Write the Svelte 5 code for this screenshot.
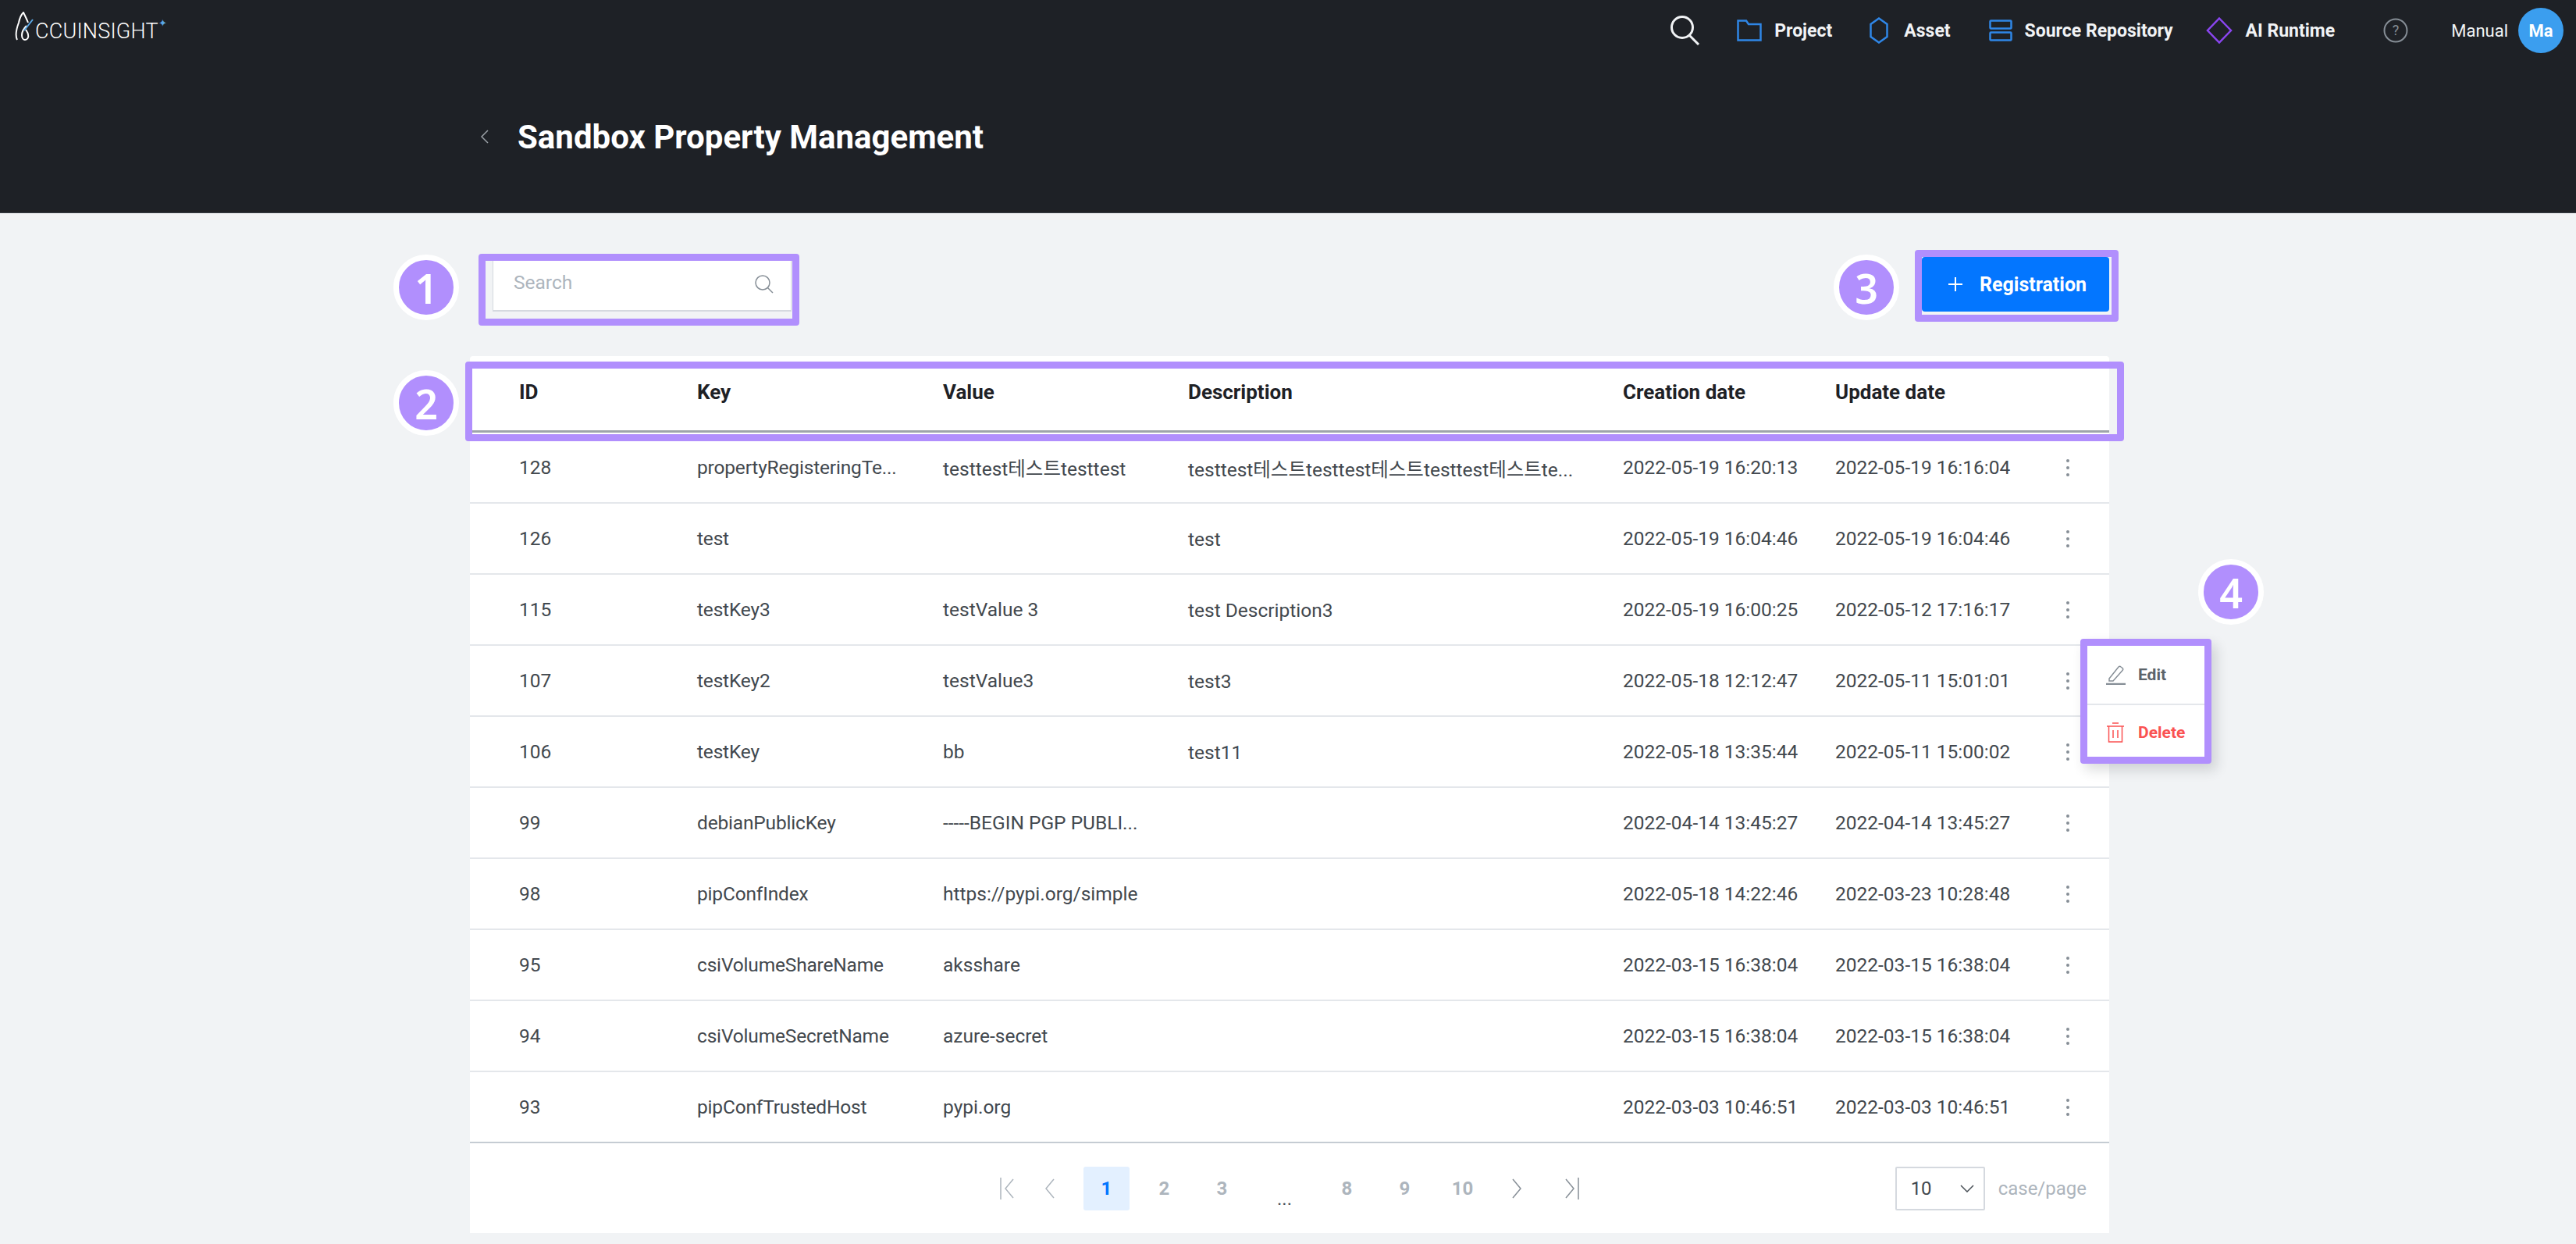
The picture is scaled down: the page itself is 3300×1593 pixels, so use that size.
<script>
    const columns = ['ID', 'Key', 'Value', 'Description', 'Creation date', 'Update date'];

    const rows = [
        { id: 128, key: 'propertyRegisteringTe...', value: 'testtest테스트testtest', description: 'testtest테스트testtest테스트testtest테스트te...', created: '2022-05-19 16:20:13', updated: '2022-05-19 16:16:04' },
        { id: 126, key: 'test', value: '', description: 'test', created: '2022-05-19 16:04:46', updated: '2022-05-19 16:04:46' },
        { id: 115, key: 'testKey3', value: 'testValue 3', description: 'test Description3', created: '2022-05-19 16:00:25', updated: '2022-05-12 17:16:17' },
        { id: 107, key: 'testKey2', value: 'testValue3', description: 'test3', created: '2022-05-18 12:12:47', updated: '2022-05-11 15:01:01' },
        { id: 106, key: 'testKey', value: 'bb', description: 'test11', created: '2022-05-18 13:35:44', updated: '2022-05-11 15:00:02' },
        { id: 99, key: 'debianPublicKey', value: '-----BEGIN PGP PUBLI...', description: '', created: '2022-04-14 13:45:27', updated: '2022-04-14 13:45:27' },
        { id: 98, key: 'pipConfIndex', value: 'https://pypi.org/simple', description: '', created: '2022-05-18 14:22:46', updated: '2022-03-23 10:28:48' },
        { id: 95, key: 'csiVolumeShareName', value: 'aksshare', description: '', created: '2022-03-15 16:38:04', updated: '2022-03-15 16:38:04' },
        { id: 94, key: 'csiVolumeSecretName', value: 'azure-secret', description: '', created: '2022-03-15 16:38:04', updated: '2022-03-15 16:38:04' },
        { id: 93, key: 'pipConfTrustedHost', value: 'pypi.org', description: '', created: '2022-03-03 10:46:51', updated: '2022-03-03 10:46:51' }
    ];

    // numbered callouts drawn over the page
    const callouts = [
        { n: 1, x: 546, y: 368 },
        { n: 2, x: 546, y: 516 },
        { n: 3, x: 2391, y: 368 },
        { n: 4, x: 2858, y: 758 }
    ];
</script>

<div class="page">
    <header class="top">
        <nav class="nav">
            <div class="logo">
                <svg width="26" height="38" viewBox="0 0 26 38" fill="none">
                    <path d="M3 36C0 30 2 22 5 14C6 9 8 4 11 1C13 5 15 9 17 14" stroke="#fff" stroke-width="2" />
                    <path d="M15 18C11 22 9 26 9 30C9 34 11 36 13 36C16 36 18 33 17 29C16.500 26 15 25 14 23" stroke="#fff" stroke-width="2" />
                    <path d="M12 24L23 10" stroke="#5ba8e6" stroke-width="2" />
                </svg>
                <span class="logo-text">CCUINSIGHT</span>
                <span class="logo-star">✦</span>
            </div>

            <div class="nav-right">
                <svg class="nav-search" width="40" height="38" viewBox="0 0 40 38" fill="none" stroke="#f1f3f5" stroke-width="3">
                    <circle cx="17" cy="15" r="13.500" />
                    <path d="M26 25L38 37" />
                </svg>

                <div class="nav-item project">
                    <svg width="32" height="28" viewBox="0 0 32 28" fill="none" stroke="#2f86e6" stroke-width="2.500">
                        <path d="M1.500 1.500H12L15 6H30.500V26.500H1.500Z" />
                    </svg>
                    <span>Project</span>
                </div>
                <div class="nav-item asset">
                    <svg width="24" height="34" viewBox="0 0 24 34" fill="none" stroke="#2f86e6" stroke-width="2.500">
                        <path d="M12 1.500L22.500 9V25L12 32.500L1.500 25V9Z" />
                    </svg>
                    <span>Asset</span>
                </div>
                <div class="nav-item source">
                    <svg width="30" height="28" viewBox="0 0 30 28" fill="none" stroke="#2f86e6" stroke-width="2.500">
                        <rect x="1.500" y="1.500" width="27" height="10" rx="1" />
                        <rect x="1.500" y="16.500" width="27" height="10" rx="1" />
                    </svg>
                    <span>Source Repository</span>
                </div>
                <div class="nav-item">
                    <svg width="36" height="34" viewBox="0 0 36 34" fill="none" stroke="#8a45f0" stroke-width="2.500">
                        <path d="M18 1.500L33 17L18 32.500L3 17Z" />
                    </svg>
                    <span>AI Runtime</span>
                </div>

                <svg class="nav-help" width="32" height="34" viewBox="0 0 32 34" fill="none">
                    <circle cx="16" cy="17" r="14.500" stroke="#868e96" stroke-width="2" />
                    <text x="16" y="23" text-anchor="middle" fill="#868e96" class="help-mark">?</text>
                </svg>

                <span class="manual">Manual</span>
                <div class="avatar">Ma</div>
            </div>
        </nav>

        <div class="title-row">
            <svg width="12" height="18" viewBox="0 0 12 18" fill="none" stroke="#9aa0a6" stroke-width="1.500">
                <path d="M10 1L2 9L10 17" />
            </svg>
            <h1>Sandbox Property Management</h1>
        </div>
    </header>

    <main class="content">
        <div class="toolbar">
            <div class="search">
                <span>Search</span>
                <svg width="26" height="26" viewBox="0 0 26 26" fill="none" stroke="#868e96" stroke-width="1.500">
                    <circle cx="11" cy="11" r="9" />
                    <path d="M17.500 17.500L24 24" />
                </svg>
            </div>
            <button class="register">
                <svg width="20" height="20" viewBox="0 0 20 20" stroke="#fff" stroke-width="2">
                    <path d="M10 1V19M1 10H19" />
                </svg>
                Registration
            </button>
        </div>

        <section class="table">
            <div class="row head">
                {#each columns as col}
                    <div>{col}</div>
                {/each}
                <div></div>
            </div>

            {#each rows as row}
                <div class="row">
                    <div>{row.id}</div>
                    <div class="key">{row.key}</div>
                    <div>{row.value}</div>
                    <div class="low">{row.description}</div>
                    <div>{row.created}</div>
                    <div>{row.updated}</div>
                    <div class="kebab"><i></i><i></i><i></i></div>
                </div>
            {/each}

            <div class="pager-bar">
                <div class="pager">
                    <svg class="pg-first" width="18" height="28" viewBox="0 0 18 28" fill="none" stroke="#adb5bd" stroke-width="1.500">
                        <path d="M1 0V28M17 2L7 14L17 26" />
                    </svg>
                    <svg class="pg-prev" width="14" height="28" viewBox="0 0 14 28" fill="none" stroke="#adb5bd" stroke-width="1.500">
                        <path d="M12 2L2 14L12 26" />
                    </svg>
                    <span class="pg active">1</span>
                    <span class="pg">2</span>
                    <span class="pg">3</span>
                    <span class="pg dots">...</span>
                    <span class="pg">8</span>
                    <span class="pg">9</span>
                    <span class="pg">10</span>
                    <svg class="pg-next" width="14" height="28" viewBox="0 0 14 28" fill="none" stroke="#868e96" stroke-width="1.500">
                        <path d="M2 2L12 14L2 26" />
                    </svg>
                    <svg class="pg-last" width="18" height="28" viewBox="0 0 18 28" fill="none" stroke="#868e96" stroke-width="1.500">
                        <path d="M1 2L11 14L1 26M17 0V28" />
                    </svg>
                </div>
                <div class="per-page">
                    <div class="select">
                        <span>10</span>
                        <svg width="18" height="10" viewBox="0 0 18 10" fill="none" stroke="#495057" stroke-width="1.500">
                            <path d="M1 1L9 9L17 1" />
                        </svg>
                    </div>
                    <span class="case">case/page</span>
                </div>
            </div>
        </section>
    </main>

    <!-- tutorial overlay -->
    <div class="frame f1"></div>
    <div class="frame f2"></div>
    <div class="frame f3"></div>

    <div class="frame menu">
        <div class="menu-item">
            <svg width="26" height="26" viewBox="0 0 26 26" fill="none" stroke="#868e96" stroke-width="1.500">
                <path d="M4 18L16 3C17 2 18 2 19 3L21 4.500C22 5.500 22 6.500 21 7.500L9 21H4Z" />
                <path d="M0 25H25" stroke-width="2.500" />
            </svg>
            <span>Edit</span>
        </div>
        <div class="menu-item danger">
            <svg width="24" height="26" viewBox="0 0 24 26" fill="none" stroke="#fa5252" stroke-width="1.500">
                <path d="M1 5H23M8 1H16M3.500 5V25H20.500V5M9 10V20M15 10V20" />
            </svg>
            <span>Delete</span>
        </div>
    </div>

    {#each callouts as c}
        <div class="callout" style="left: {c.x - 42}px; top: {c.y - 42}px">{c.n}</div>
    {/each}
</div>

<style>
    :global(body) {
        background: #f1f3f5;
    }

    .page {
        position: relative;
        height: 1593px;
        overflow: hidden;
        background: #f1f3f5;
        font-family: Roboto, "Noto Sans CJK KR", sans-serif;
        color: #42484e;
    }

    .top {
        height: 272px;
        background: #1e2126;
        border-bottom: 1px solid #3a3f45;
    }

    .nav {
        display: flex;
        align-items: center;
        height: 78px;
        padding: 0 16px 0 19px;
    }

    .logo {
        display: flex;
        align-items: flex-end;
        height: 38px;
        margin-top: -10px;
        color: #fff;
    }

    .logo-text {
        font-size: 27px;
        font-weight: 300;
        line-height: 26px;
        letter-spacing: 0.2px;
    }

    .logo-star {
        align-self: flex-start;
        margin-top: 8px;
        font-size: 13px;
        line-height: 13px;
        color: #5ba8e6;
    }

    .nav-right {
        display: flex;
        align-items: center;
        margin-left: auto;
        color: #f1f3f5;
    }

    .nav-search {
        margin-right: 47px;
    }

    .nav-item {
        display: flex;
        align-items: center;
        gap: 16px;
        margin-right: 44px;
        font-size: 23px;
        font-weight: 700;
    }

    .project {
        margin-right: 48px;
    }

    .asset {
        gap: 20px;
        margin-right: 49px;
    }

    .source {
        margin-right: 41px;
    }

    .nav-help {
        margin: 0 55px 0 18px;
    }

    .help-mark {
        font-size: 18px;
    }

    .manual {
        margin-right: 13px;
        font-size: 22px;
    }

    .avatar {
        display: flex;
        align-items: center;
        justify-content: center;
        width: 58px;
        height: 58px;
        border-radius: 50%;
        background: #3b9eef;
        color: #fff;
        font-size: 22px;
        font-weight: 700;
    }

    .title-row {
        display: flex;
        align-items: center;
        gap: 36px;
        height: 50px;
        margin-top: 72px;
        padding-left: 615px;
    }

    h1 {
        margin: 0;
        color: #fff;
        font-size: 42px;
        font-weight: 700;
    }

    .content {
        width: 2100px;
        margin-left: 602px;
    }

    .toolbar {
        display: flex;
        justify-content: space-between;
        height: 70px;
        margin: 56px 0 57px;
    }

    .search {
        display: flex;
        align-items: center;
        justify-content: space-between;
        box-sizing: border-box;
        width: 383px;
        margin-left: 29px;
        padding: 0 21px 0 26px;
        background: #fff;
        border: 1px solid #d5d9df;
        border-bottom-width: 2px;
        color: #adb5bd;
        font-size: 24.500px;
    }

    .search span {
        margin-bottom: 5px;
    }

    .register {
        display: flex;
        align-items: center;
        gap: 21px;
        box-sizing: border-box;
        width: 240px;
        padding: 0 0 0 33px;
        background: #0376ff;
        border: none;
        border-radius: 4px;
        color: #fff;
        font-family: inherit;
        font-size: 25px;
        font-weight: 700;
    }

    .table {
        background: #fff;
        border-radius: 4px 4px 0 0;
    }

    .row {
        display: grid;
        grid-template-columns: 228px 315px 314px 557px 272px 272px 52px;
        align-items: center;
        box-sizing: border-box;
        height: 91px;
        padding: 0 27px 0 63px;
        border-bottom: 2px solid #e4e7eb;
        font-size: 24.500px;
        white-space: nowrap;
    }

    .row:nth-last-child(2) {
        border-bottom-color: #c5ccd3;
    }

    .head {
        height: 98px;
        padding-bottom: 4px;
        border-bottom: 3px solid #9ea4aa;
        color: #1e2126;
        font-size: 26px;
        font-weight: 700;
    }

    .key {
        letter-spacing: -0.18px;
    }

    .low {
        padding-top: 2px;
    }

    .kebab {
        display: flex;
        flex-direction: column;
        align-items: center;
        gap: 5px;
    }

    .kebab i {
        width: 4px;
        height: 4px;
        border-radius: 50%;
        background: #868e96;
    }

    .pager-bar {
        display: flex;
        align-items: center;
        justify-content: space-between;
        height: 115px;
        padding: 0 29px 0 679px;
    }

    .pager {
        display: flex;
        align-items: center;
        gap: 15px;
        color: #adb5bd;
        font-size: 24px;
        font-weight: 700;
    }

    .pg {
        display: flex;
        align-items: center;
        justify-content: center;
        width: 59px;
        height: 56px;
        border-radius: 3px;
    }

    .active {
        background: #e3f0ff;
        color: #0376ff;
    }

    .dots {
        margin: 0 6px;
        padding-top: 26px;
        box-sizing: border-box;
        color: #495057;
        font-weight: 400;
    }

    .pg-first {
        margin-right: 24px;
    }

    .pg-prev {
        margin-right: 21px;
    }

    .pg-next {
        margin-left: 18px;
    }

    .pg-last {
        margin-left: 40px;
    }

    .per-page {
        display: flex;
        align-items: center;
        gap: 17px;
    }

    .select {
        display: flex;
        align-items: center;
        justify-content: space-between;
        box-sizing: border-box;
        width: 115px;
        height: 56px;
        padding: 0 12px 0 18px;
        border: 2px solid #d5d9df;
        border-radius: 2px;
        font-size: 24px;
    }

    .case {
        color: #adb5bd;
        font-size: 24px;
    }

    .frame {
        position: absolute;
        box-sizing: border-box;
        border: 9px solid #b18ffd;
        border-radius: 4px;
    }

    .f1 {
        left: 613px;
        top: 325px;
        width: 411px;
        height: 92px;
    }

    .f2 {
        left: 596px;
        top: 463px;
        width: 2125px;
        height: 102px;
    }

    .f3 {
        left: 2453px;
        top: 320px;
        width: 261px;
        height: 92px;
    }

    .menu {
        left: 2665px;
        top: 818px;
        width: 168px;
        height: 160px;
        background: #fff;
        box-shadow: 6px 8px 16px rgba(33, 37, 41, 0.16);
    }

    .menu-item {
        display: flex;
        align-items: center;
        gap: 15px;
        height: 74px;
        padding-left: 24px;
        color: #5c636a;
        font-size: 21px;
        font-weight: 700;
    }

    .menu-item:first-child {
        border-bottom: 2px solid #e4e7eb;
    }

    .danger {
        gap: 17px;
        height: 70px;
        color: #fa5252;
    }

    .callout {
        position: absolute;
        display: flex;
        align-items: center;
        justify-content: center;
        box-sizing: border-box;
        width: 84px;
        height: 84px;
        border: 7px solid #fff;
        border-radius: 50%;
        background: #b18ffd;
        color: #fff;
        font-family: "Noto Sans", sans-serif;
        font-size: 52px;
        font-weight: 600;
    }
</style>
